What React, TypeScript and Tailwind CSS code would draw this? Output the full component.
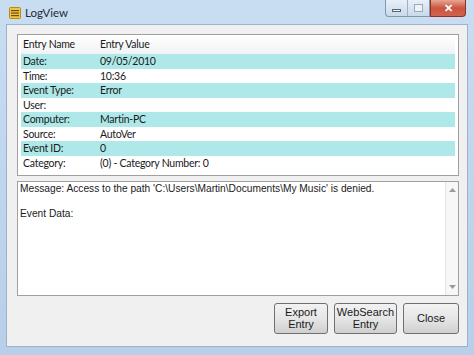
import React from 'react';

const ROWS: { name: string; value: string }[] = [
  { name: 'Date:', value: '09/05/2010' },
  { name: 'Time:', value: '10:36' },
  { name: 'Event Type:', value: 'Error' },
  { name: 'User:', value: '' },
  { name: 'Computer:', value: 'Martin-PC' },
  { name: 'Source:', value: 'AutoVer' },
  { name: 'Event ID:', value: '0' },
  { name: 'Category:', value: '(0) - Category Number: 0' },
];

const listFont = { fontFamily: 'Lato, "Noto Sans", Arial, sans-serif' };
const msgFont = { fontFamily: '"Liberation Sans", Arial, sans-serif' };

function AppIcon() {
  return (
    <svg width="12" height="12" viewBox="0 0 12 12">
      <rect x="0.5" y="0.5" width="11" height="11" rx="1" fill="#f2c43c" stroke="#b98a16" />
      <rect x="2" y="3" width="8" height="1.2" fill="#6b4e10" />
      <rect x="2" y="5.5" width="8" height="1.2" fill="#6b4e10" />
      <rect x="2" y="8" width="8" height="1.2" fill="#6b4e10" />
    </svg>
  );
}

function WindowControls() {
  return (
    <div className="flex h-[17px]">
      <div className="flex border border-[#8597ad] border-t-0 rounded-bl-[4px] overflow-hidden bg-gradient-to-b from-[#e8f0f8] to-[#c9d9eb]">
        <div className="w-[22px] flex items-center justify-center border-r border-[#9eb0c5]">
          <div className="w-[9px] h-[3px] bg-[#f4f6f8] border border-[#57667a] mt-[5px]" />
        </div>
        <div className="w-[21px] flex items-center justify-center">
          <div className="w-[9px] h-[8px] border border-[#9aa8b9] bg-[#eef3f8]" />
        </div>
      </div>
      <div className="w-[36px] flex items-center justify-center border border-[#8a3226] border-t-0 rounded-br-[4px] bg-gradient-to-b from-[#e6a594] via-[#cb5440] to-[#d0644c]">
        <span className="text-white text-[11px] font-bold leading-none" style={msgFont}>
          ✕
        </span>
      </div>
    </div>
  );
}

function Button({ lines, w }: { lines: string[]; w: string }) {
  return (
    <div
      className={`${w} h-[31px] flex flex-col items-center justify-center rounded-[3px] border border-[#707070] bg-gradient-to-b from-[#f2f2f2] via-[#e6e6e6] to-[#cfcfcf] text-[11px] leading-[11.5px] text-[#1a1a1a]`}
      style={msgFont}
    >
      {lines.map(l => (
        <span key={l}>{l}</span>
      ))}
    </div>
  );
}

export default function App() {
  return (
    <div className="w-[474px] h-[355px] flex flex-col bg-gradient-to-b from-[#c9ddf2] via-[#c0d6ee] to-[#b7cfe9] overflow-hidden">
      {/* Title bar */}
      <div className="h-[24px] flex items-start justify-between pl-[9px] pr-[8px]">
        <div className="flex items-center gap-[4px] h-[24px] pt-[2px]">
          <AppIcon />
          <span className="text-[11.5px] text-[#1e2b3a]" style={listFont}>
            LogView
          </span>
        </div>
        <WindowControls />
      </div>

      {/* Client area */}
      <div className="flex-1 mx-[6px] mb-[8px] bg-[#f0f0f0] border border-[#9cb2ca] flex flex-col pt-[9px] pl-[10px] pr-[8px]">
        {/* Entry list */}
        <div className="h-[142px] bg-white border border-[#a0a0a0] px-[3px] flex flex-col text-[10.5px] tracking-[-0.25px] text-[#1a1a1a]" style={listFont}>
          <div className="h-[19px] flex items-center bg-gradient-to-b from-white to-[#f1f2f4] pl-[2px]">
            <span className="w-[77px]">Entry Name</span>
            <span>Entry Value</span>
          </div>
          {ROWS.map((r, i) => (
            <div
              key={r.name}
              className={`h-[14.5px] flex items-center pl-[2px] leading-none ${i % 2 === 0 ? 'bg-[#aee8e8]' : 'bg-white'}`}
            >
              <span className="w-[77px]">{r.name}</span>
              <span>{r.value}</span>
            </div>
          ))}
        </div>

        {/* Message box */}
        <div className="mt-[5px] h-[115px] bg-white border border-[#a0a0a0] flex">
          <div className="flex-1 pl-[2px] pt-[1px] text-[10.2px] leading-[12.5px] text-[#1a1a1a]" style={msgFont}>
            <div>Message: Access to the path 'C:\Users\Martin\Documents\My Music' is denied.</div>
            <div className="h-[12.5px]" />
            <div>Event Data:</div>
          </div>
          <div className="w-[13px] flex flex-col items-center justify-between bg-[#f7f7f7] border-l border-[#e3e3e3] py-[6px]">
            <svg width="7" height="4" viewBox="0 0 7 4">
              <path d="M0 4 L3.5 0 L7 4 Z" fill="#9a9a9a" />
            </svg>
            <svg width="7" height="4" viewBox="0 0 7 4">
              <path d="M0 0 L3.5 4 L7 0 Z" fill="#9a9a9a" />
            </svg>
          </div>
        </div>

        {/* Buttons */}
        <div className="mt-[7px] flex justify-end gap-[6px]">
          <Button lines={['Export', 'Entry']} w="w-[54px]" />
          <Button lines={['WebSearch', 'Entry']} w="w-[63px]" />
          <Button lines={['Close']} w="w-[56px]" />
        </div>
      </div>
    </div>
  );
}
